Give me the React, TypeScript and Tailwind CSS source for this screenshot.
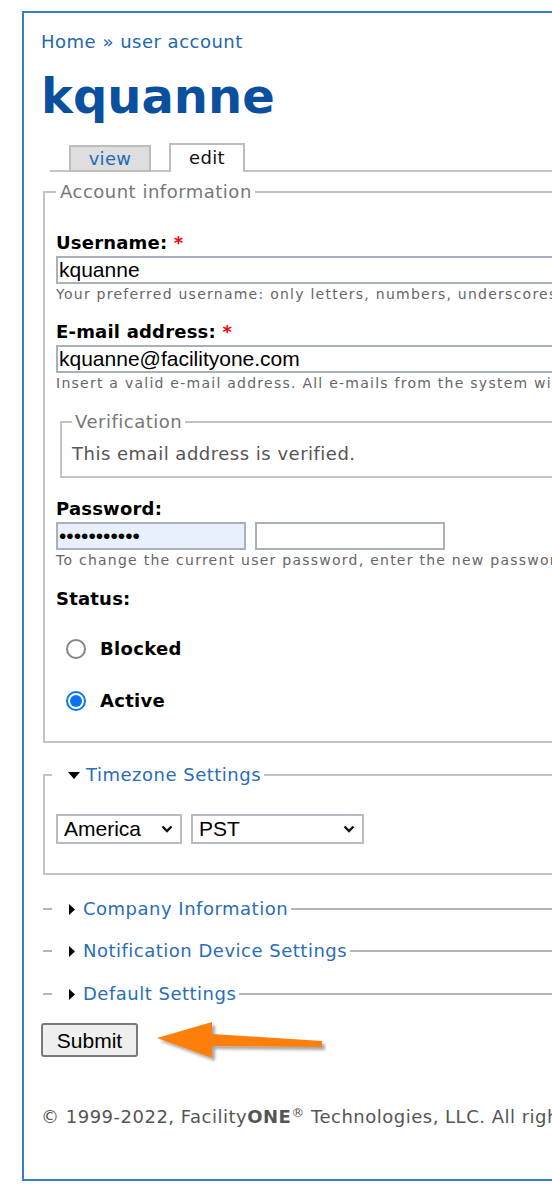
import React from "react";

const inputFont = "font-['Liberation_Sans',Arial,sans-serif]";

function TextBox({ value, width, type = "text", tint = false }: { value: string; width: string; type?: string; tint?: boolean }) {
  return (
    <input
      type={type}
      readOnly
      value={value}
      className={`${width} h-[28px] border-2 border-[#aab1ba] px-[1px] text-[21px] leading-[24px] text-black outline-none ${inputFont} ${tint ? "bg-[#e8f0fe]" : "bg-white"}`}
    />
  );
}

function Select({ label, width }: { label: string; width: string }) {
  return (
    <div className={`${width} flex h-[30px] items-center justify-between border-2 border-[#b7bcc3] pl-[6px] pr-[7px] text-[21px] text-black ${inputFont}`}>
      <span>{label}</span>
      <svg width="12" height="8" viewBox="0 0 12 8">
        <path d="M1.5 1.5 L6 6 L10.5 1.5" fill="none" stroke="#111" strokeWidth="2.4" />
      </svg>
    </div>
  );
}

function Radio({ checked, label }: { checked?: boolean; label: string }) {
  return (
    <div className="ml-[10px] flex h-[22px] items-center gap-[14px]">
      {checked ? (
        <span className="flex h-[20px] w-[20px] items-center justify-center rounded-full border-2 border-[#0a75f0] bg-white">
          <span className="h-[12px] w-[12px] rounded-full bg-[#0a75f0]" />
        </span>
      ) : (
        <span className="h-[20px] w-[20px] rounded-full border-2 border-[#858585] bg-white" />
      )}
      <span className="text-[18px] font-bold leading-[22px] tracking-[0.3px] text-black">{label}</span>
    </div>
  );
}

function Collapsed({ title, className }: { title: string; className: string }) {
  return (
    <fieldset className={`ml-[2px] w-[680px] border-t-2 border-[#b5b5b5] px-[9px] ${className}`}>
      <legend className="flex items-center pl-[17px] pr-[3px] text-[18px] leading-[22px] tracking-[0.5px]">
        <svg width="6" height="11" viewBox="0 0 6 11" className="mr-[8px]">
          <path d="M0 0 L6 5.5 L0 11 Z" fill="#000" />
        </svg>
        <a className="text-[#2a6db8]">{title}</a>
      </legend>
    </fieldset>
  );
}

function Help({ children }: { children: React.ReactNode }) {
  return (
    <div className="mt-[2px] whitespace-nowrap text-[14px] leading-[16px] tracking-[1.25px] text-[#666]">{children}</div>
  );
}

export default function App() {
  return (
    <div className="h-[1189px] w-[552px] overflow-hidden bg-white font-['DejaVu_Sans',Verdana,sans-serif]">
      <div className="ml-[22px] mt-[11px] w-[720px] border-2 border-[#3b7cc8] pb-[50px] pl-[17px] pr-4 pt-[17px]">
        {/* breadcrumb */}
        <div className="text-[18px] leading-[24px] tracking-[0.5px] text-[#2466b2]">
          <a>Home</a> » <a>user account</a>
        </div>

        <h1 className="mt-[14px] text-[48px] font-bold leading-[56px] text-[#0b4f9f]">kquanne</h1>

        {/* tabs */}
        <ul className="ml-[9px] mt-[19px] flex items-end gap-[18px] border-b-2 border-[#c4c4c4] pl-[19px] text-[18px] tracking-[0.3px]">
          <li className="-mb-[2px] flex h-[27px] w-[82px] items-center justify-center border-2 border-[#bdbdbd] bg-[#dedede] text-[#2369b3]">
            view
          </li>
          <li className="-mb-[2px] flex h-[29px] w-[76px] items-center justify-center border-2 border-b-0 border-[#bdbdbd] bg-white pb-[2px] text-[#111]">
            edit
          </li>
        </ul>

        {/* account information */}
        <fieldset className="ml-[2px] mt-[9px] w-[680px] border-2 border-[#c3c3c3] px-[11px] pb-[29px]">
          <legend className="pl-[4px] pr-[3px] text-[18px] leading-[22px] tracking-[0.5px] text-[#777]">Account information</legend>
          <div className="pt-[29px]">
            <div className="text-[18px] font-bold leading-[22px] tracking-[0.2px] text-black">
              Username: <span className="text-[#f00]">*</span>
            </div>
            <div className="mt-[2px]">
              <TextBox value="kquanne" width="w-[640px]" />
            </div>
            <Help>Your preferred username: only letters, numbers, underscores and periods are allowed.</Help>

            <div className="mt-[19px] text-[18px] font-bold leading-[22px] tracking-[0.2px] text-black">
              E-mail address: <span className="text-[#f00]">*</span>
            </div>
            <div className="mt-[2px]">
              <TextBox value="kquanne@facilityone.com" width="w-[640px]" />
            </div>
            <Help>Insert a valid e-mail address. All e-mails from the system will be sent to this address.</Help>

            <fieldset className="ml-[4px] mt-[20px] w-[620px] border-2 border-[#c3c3c3] px-[10px] pb-[11px]">
              <legend className="pl-[3px] pr-[3px] text-[18px] leading-[22px] tracking-[0.5px] text-[#777]">Verification</legend>
              <div className="pt-[10px] text-[18px] leading-[22px] tracking-[0.5px] text-[#555]">This email address is verified.</div>
            </fieldset>

            <div className="mt-[20px] text-[18px] font-bold leading-[22px] tracking-[0.2px] text-black">Password:</div>
            <div className="mt-[2px] flex gap-[9px]">
              <TextBox type="password" value="aaaaaaaaaaa" width="w-[190px]" tint />
              <TextBox type="password" value="" width="w-[190px]" />
            </div>
            <Help>To change the current user password, enter the new password in both fields.</Help>

            <div className="mt-[20px] text-[18px] font-bold leading-[22px] tracking-[0.2px] text-black">Status:</div>
            <div className="mt-[28px]">
              <Radio label="Blocked" />
            </div>
            <div className="mt-[30px]">
              <Radio checked label="Active" />
            </div>
          </div>
        </fieldset>

        {/* timezone */}
        <fieldset className="ml-[2px] mt-[21px] w-[680px] border-2 border-[#c3c3c3] px-[7px] pb-[29px]">
          <legend className="flex items-center pl-[16px] pr-[3px] text-[18px] leading-[22px] tracking-[0.5px]">
            <svg width="12" height="7" viewBox="0 0 12 7" className="mr-[6px]">
              <path d="M0 0 L12 0 L6 7 Z" fill="#000" />
            </svg>
            <a className="text-[#2a6db8]">Timezone Settings</a>
          </legend>
          <div className="flex gap-[9px] pl-[4px] pt-[28px]">
            <Select label="America" width="w-[126px]" />
            <Select label="PST" width="w-[173px]" />
          </div>
        </fieldset>

        <Collapsed title="Company Information" className="mt-[23px]" />
        <Collapsed title="Notification Device Settings" className="mt-[20px]" />
        <Collapsed title="Default Settings" className="mt-[21px]" />

        {/* submit */}
        <div className="mt-[18px] flex items-start">
          <button
            className={`h-[34px] w-[97px] rounded-[3px] border-2 border-[#7a7a7a] bg-[#efefef] text-[21px] text-black ${inputFont}`}
          >
            Submit
          </button>
          <svg width="172" height="44" viewBox="0 0 172 44" className="-my-[5px] ml-[17px]">
            <defs>
              <filter id="sh" x="-10%" y="-30%" width="130%" height="180%">
                <feDropShadow dx="3" dy="3" stdDeviation="1.6" floodColor="#000" floodOpacity="0.35" />
              </filter>
            </defs>
            <path
              d="M2 20 L57 4 L57 16 L167 23 L167 29 L57 28 L57 40 Z"
              fill="#ff7f0a"
              filter="url(#sh)"
            />
          </svg>
        </div>

        {/* footer */}
        <div className="mt-[48px] whitespace-nowrap text-[18px] leading-[24px] tracking-[0.5px] text-[#555]">
          © 1999-2022, Facility<b>ONE</b>
          <sup className="text-[13px]">®</sup> Technologies, LLC. All rights reserved.
        </div>
      </div>
    </div>
  );
}
